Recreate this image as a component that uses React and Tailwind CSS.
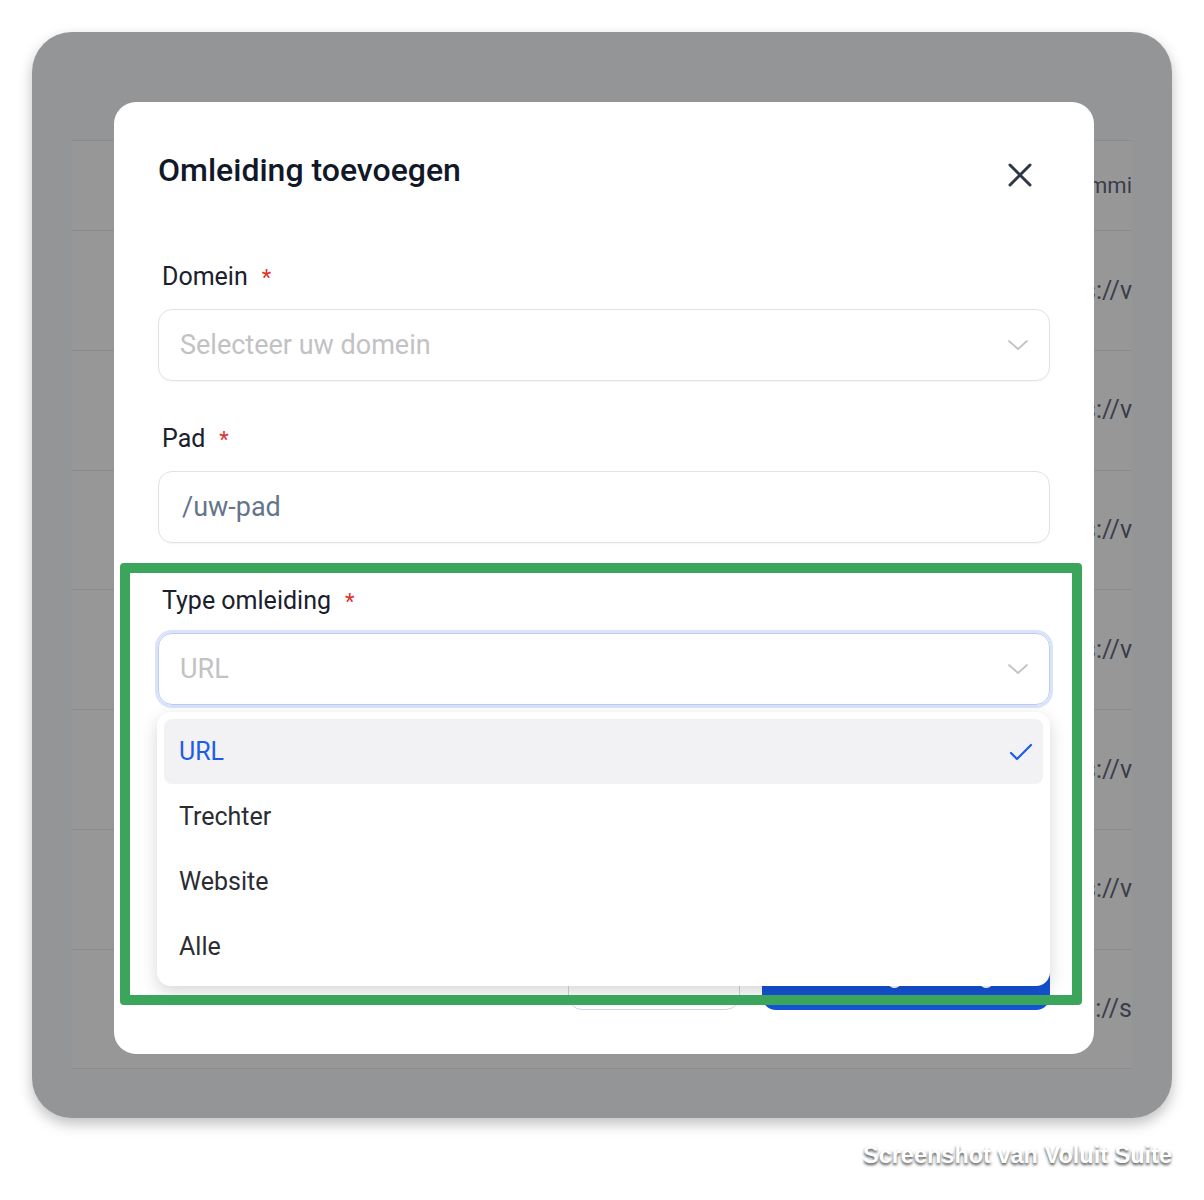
import { useState } from 'react'

const rows = ['https://v', 'https://v', 'https://v', 'https://v', 'https://v', 'https://v', 'https://s']

const options = ['URL', 'Trechter', 'Website', 'Alle']

const Chevron = () => (
    <svg width="22" height="12" viewBox="0 0 22 12" fill="none" stroke="#c2c2c4" strokeWidth="1.7" strokeLinecap="round" strokeLinejoin="round">
        <path d="M2 2l9 8 9-8" />
    </svg>
)

const Label = ({ children }) => (
    <label className="flex h-8 items-center gap-[14px] pl-1 text-[25px] text-[#1a202c]">
        {children}
        <span className="text-[22px] text-[#e0312b]">*</span>
    </label>
)

const App = () => {
    const [type, setType] = useState('URL')

    return (
        <div className="min-h-[1200px] bg-white pt-8 font-['Roboto',sans-serif]">
            {/* dimmed page behind the modal */}
            <div className="relative mx-8 h-[1086px] overflow-hidden rounded-[40px] bg-[#949597] shadow-[0_6px_14px_rgba(0,0,0,0.25)]">
                <div className="mx-10 mt-[108px] bg-[#979798]">
                    <div className="flex h-[91px] items-center justify-end border-y border-[#8b8b8d]">
                        <div className="flex w-[100px] justify-end overflow-hidden whitespace-nowrap text-[22px] text-[#3a3e48]">Commi</div>
                    </div>
                    {rows.map((r, i) => (
                        <div key={i} className="flex h-[119.75px] items-center justify-end border-b border-[#8b8b8d]">
                            <div className="flex w-[100px] justify-end overflow-hidden whitespace-nowrap text-[25px] text-[#3a3e48]">{r}</div>
                        </div>
                    ))}
                </div>

                {/* modal */}
                <div className="absolute left-[82px] top-[70px] w-[980px] rounded-[22px] bg-white px-11 pb-11 pt-[50px]">
                    <div className="flex items-start justify-between">
                        <h2 className="text-[32px] font-medium leading-9 text-[#111827]">Omleiding toevoegen</h2>
                        <svg className="mr-[18px] mt-[11px]" width="24" height="24" viewBox="0 0 24 24" fill="none" stroke="#2d3748" strokeWidth="3" strokeLinecap="round">
                            <path d="M2 2l20 20M22 2L2 22" />
                        </svg>
                    </div>

                    <form className="mt-[73px]">
                        <Label>Domein</Label>
                        <div className="mt-4 flex h-[72px] items-center justify-between rounded-[14px] border border-[#e1e1e6] pl-[21px] pr-5 shadow-[0_1px_2px_rgba(0,0,0,0.04)]">
                            <span className="text-[27px] text-[#c2c2c4]">Selecteer uw domein</span>
                            <Chevron />
                        </div>

                        <div className="mt-[42px]">
                            <Label>Pad</Label>
                        </div>
                        <div className="mt-4 flex h-[72px] items-center rounded-[14px] border border-[#e1e1e6] pl-[23px] shadow-[0_1px_2px_rgba(0,0,0,0.04)]">
                            <span className="text-[27px] text-[#64748b]">/uw-pad</span>
                        </div>

                        <div className="mt-[42px]">
                            <Label>Type omleiding</Label>
                        </div>
                        <div className="mt-4 flex h-[72px] items-center justify-between rounded-[14px] border border-[#bccbf1] pl-[21px] pr-5 ring-[3px] ring-[#d9e3fa]">
                            <span className="text-[27px] text-[#c2c2c4]">{type}</span>
                            <Chevron />
                        </div>

                        {/* room for the field hidden behind the open list */}
                        <div className="mt-[42px] h-[120px]"></div>

                        <div className="mt-[73px] flex justify-end gap-[22px]">
                            <button type="button" className="h-[70px] w-[172px] rounded-[14px] border border-[#cbd5e1] text-[24px] text-[#1f2937]">
                                Annuleren
                            </button>
                            <button type="button" className="h-[70px] w-[288px] rounded-[14px] bg-[#1453d6] text-[24px] font-medium text-white">
                                Omleiding toevoegen
                            </button>
                        </div>
                    </form>

                    {/* open select list */}
                    <div className="absolute left-[43px] top-[610px] z-10 h-[274px] w-[893px] rounded-[14px] bg-white p-[7px] shadow-[0_6px_18px_rgba(0,0,0,0.16)]">
                        {options.map((o) => (
                            <div
                                key={o}
                                onClick={() => setType(o)}
                                className={
                                    o === type
                                        ? 'flex h-[65px] items-center justify-between rounded-[8px] bg-[#f2f2f4] pl-[15px] pr-[10px] text-[25px] text-[#1d5ce6]'
                                        : 'flex h-[65px] items-center justify-between rounded-[8px] pl-[15px] pr-[10px] text-[25px] text-[#2b2d33]'
                                }
                            >
                                {o}
                                {o === type && (
                                    <svg width="24" height="18" viewBox="0 0 24 18" fill="none" stroke="#1d5ce6" strokeWidth="2.2" strokeLinecap="round" strokeLinejoin="round">
                                        <path d="M2 10l6 6L22 2" />
                                    </svg>
                                )}
                            </div>
                        ))}
                    </div>

                    {/* highlight frame */}
                    <div className="pointer-events-none absolute left-[6px] top-[461px] z-20 h-[442px] w-[962px] rounded-[4px] border-[10px] border-[#3ba55c]"></div>
                </div>
            </div>

            <div className="mr-8 mt-[20px] text-right text-[23.5px] font-bold text-white [font-family:'Liberation_Sans',sans-serif] [text-shadow:0_2px_3px_rgba(0,0,0,0.7)]">
                Screenshot van Voluit Suite
            </div>
        </div>
    )
}

export default App
